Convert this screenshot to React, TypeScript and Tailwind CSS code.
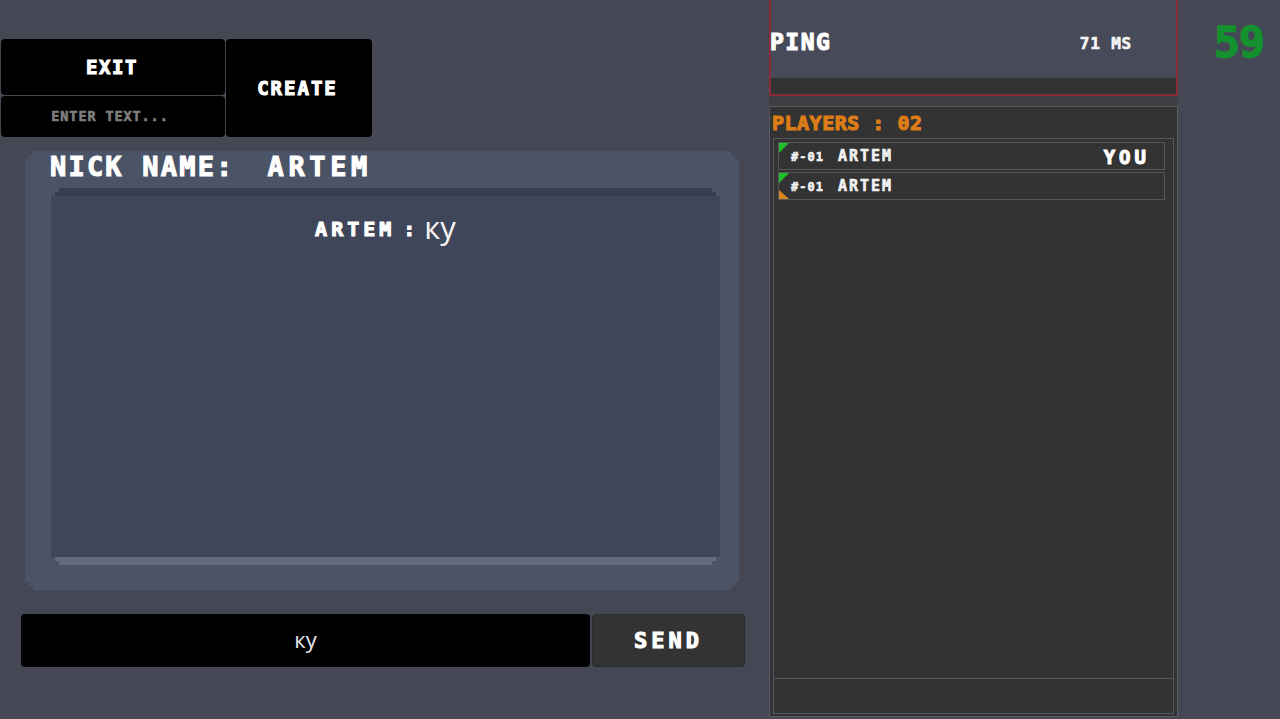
const base = "font-['DejaVu_Sans_Mono',monospace] font-bold uppercase leading-none whitespace-nowrap";
const px = `${base} [-webkit-text-stroke:0.6px_currentColor]`;
const pxHeavy = `${base} [-webkit-text-stroke:1.1px_currentColor]`;
const notch =
  "[clip-path:polygon(8px_0,calc(100%-8px)_0,calc(100%-8px)_4px,calc(100%-4px)_4px,calc(100%-4px)_8px,100%_8px,100%_calc(100%-8px),calc(100%-4px)_calc(100%-8px),calc(100%-4px)_calc(100%-4px),calc(100%-8px)_calc(100%-4px),calc(100%-8px)_100%,8px_100%,8px_calc(100%-4px),4px_calc(100%-4px),4px_calc(100%-8px),0_calc(100%-8px),0_8px,4px_8px,4px_4px,8px_4px)]";

function PlayerRow({ you, ready }: { you?: boolean; ready?: boolean }) {
  return (
    <div className="relative flex h-[28px] items-center border border-[#55565c] pl-[12px] pr-[14px]">
      <span className="absolute left-0 top-0 h-[10px] w-[10px] bg-[#1fc02c] [clip-path:polygon(0_0,100%_0,0_100%)]" />
      {ready && (
        <span className="absolute bottom-0 left-0 h-[9px] w-[10px] bg-[#d98620] [clip-path:polygon(0_0,100%_100%,0_100%)]" />
      )}
      <span className={`${px} mt-[1px] w-[47px] text-[12px] tracking-[1px] text-[#f2f2f2]`}>#-01</span>
      <span className={`${px} mt-[1px] text-[15px] tracking-[2px] text-[#f2f2f2]`}>Artem</span>
      {you && <span className={`${pxHeavy} ml-auto mt-[2px] text-[19px] tracking-[4px] text-white`}>You</span>}
    </div>
  );
}

export default function App() {
  return (
    <div className="flex h-[719px] w-[1280px] overflow-hidden bg-[#454754] font-['Open_Sans',sans-serif]">
      {/* left side: lobby + chat */}
      <div className="flex w-[769px] flex-col">
        <div className="ml-px mt-[39px] flex h-[98px] gap-px">
          <div className="flex w-[224px] flex-col gap-px">
            <button className={`${pxHeavy} flex h-[56px] items-center justify-center rounded-[4px] bg-black pr-[2px] text-[19px] tracking-[1.6px] text-white`}>
              Exit
            </button>
            <div className={`${px} flex flex-1 items-center justify-center rounded-[4px] bg-black pr-[6px] text-[13.5px] tracking-[0.9px] text-[#7f7f7f]`}>
              Enter text...
            </div>
          </div>
          <button className={`${pxHeavy} w-[146px] rounded-[4px] bg-black pr-[3px] text-[19px] tracking-[2px] text-white`}>
            Create
          </button>
        </div>

        <div className={`ml-[25px] mt-[14px] flex h-[439px] w-[714px] flex-col bg-[#4b5367] px-[26px] ${notch}`}>
          <div className={`${pxHeavy} -ml-px flex h-[37px] items-center pb-[7px] text-[27px] tracking-[2.2px] text-white`}>
            <span>Nick name:</span>
            <span className="ml-[33px] tracking-[4.6px]">Artem</span>
          </div>
          <div className={`h-[377px] w-[669px] border-b-[8px] border-t-[8px] border-b-[#636b7d] border-t-[#393e4f] bg-[#404659] pt-[13px] ${notch}`}>
            <div className="flex items-center justify-center">
              <span className={`${pxHeavy} mt-[4px] text-[20px] tracking-[4px] text-white`}>Artem</span>
              <span className={`${pxHeavy} ml-[8px] mt-[4px] text-[20px] text-white`}>:</span>
              <span className="ml-[9px] text-[31px] leading-[36px] text-[#f4f4f4]">ку</span>
            </div>
          </div>
        </div>

        <div className="ml-[21px] mt-[24px] flex h-[53px] gap-[2px]">
          <div className="flex w-[569px] items-center justify-center rounded-[4px] bg-black pb-[3px] text-[22px] text-[#e8e8e8]">
            ку
          </div>
          <button className={`${pxHeavy} w-[153px] rounded-[4px] border border-[#2a2b30] bg-[#333333] text-[22px] tracking-[4px] text-white`}>
            Send
          </button>
        </div>
      </div>

      {/* right side: ping + players */}
      <div className="flex w-[409px] flex-col">
        <div className="flex h-[96px] flex-col border-x-2 border-b-2 border-[#8a2c35]">
          <div className="flex h-[78px] items-center justify-between bg-[#474a59] pl-0 pr-[44px] pt-[7px]">
            <span className={`${pxHeavy} -ml-[1px] text-[23px] tracking-[1.5px] text-white`}>Ping</span>
            <span className={`${px} mt-[3px] text-[16px] tracking-[0.8px] text-[#f4f4f4]`}>71 ms</span>
          </div>
          <div className="flex-1 bg-[#333333]" />
        </div>
        <div className="h-[10px] bg-[#3e3f45]" />
        <div className="flex h-[611px] flex-col border border-[#5a5b62] bg-[#333333] px-[3px] pb-[2px]">
          <div className={`${pxHeavy} -ml-px flex h-[31px] items-center text-[20px] tracking-[0.5px] text-[#dd7d17]`}>
            Players : 02
          </div>
          <div className="flex h-[541px] flex-col gap-[2px] border border-[#55565c] pl-[4px] pr-[8px] pt-[3px]">
            <PlayerRow you />
            <PlayerRow ready />
          </div>
          <div className="h-[35px] border-x border-b border-[#55565c]" />
        </div>
      </div>

      {/* fps counter */}
      <div className="flex-1 pl-[36px] pt-[21px]">
        <span className={`${base} text-[43px] tracking-[-1px] text-[#14902e] [-webkit-text-stroke:1.6px_currentColor]`}>59</span>
      </div>
    </div>
  );
}
